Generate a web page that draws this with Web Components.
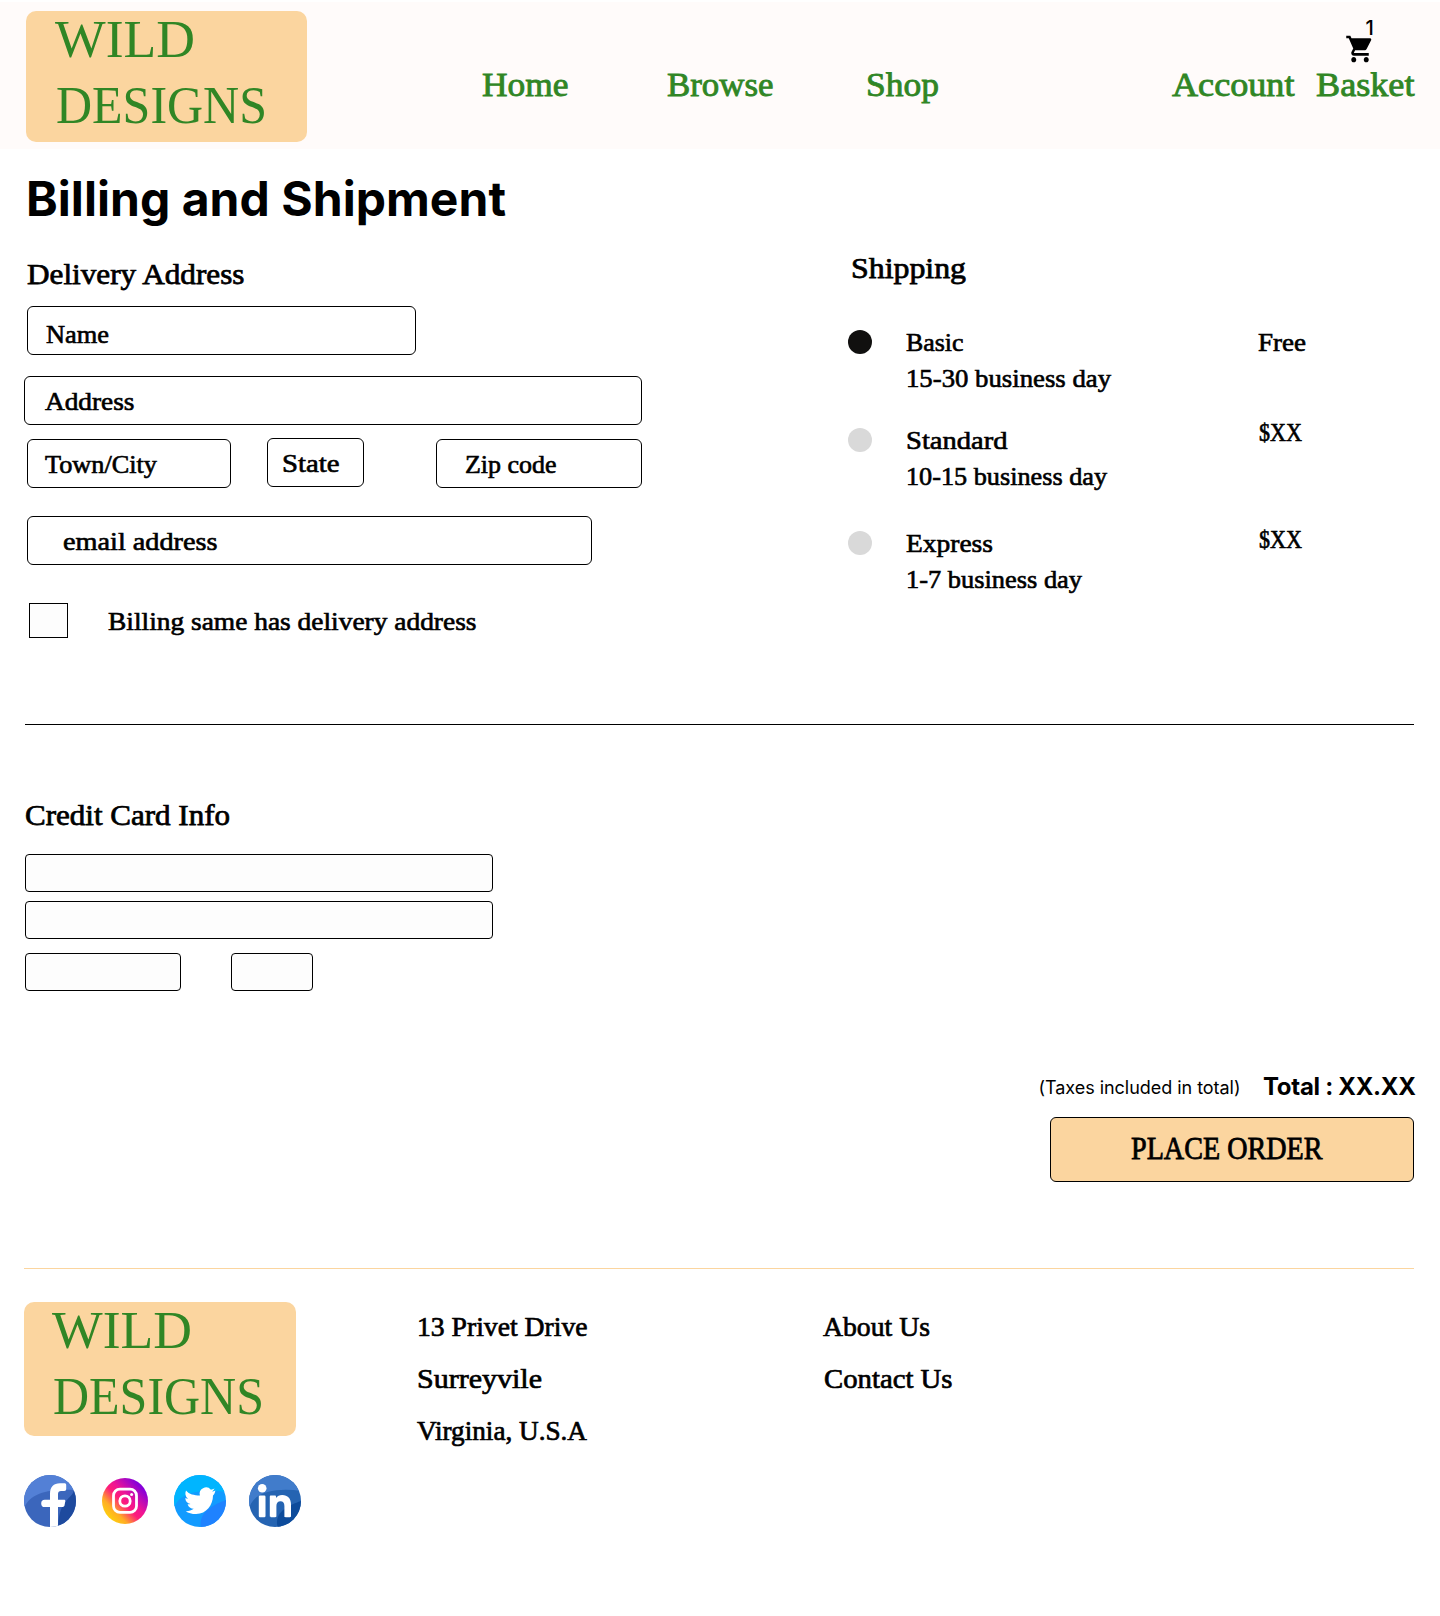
<!DOCTYPE html>
<html lang="en">
<head>
<meta charset="utf-8">
<title>Wild Designs – Billing and Shipment</title>
<style>
  html, body { margin: 0; background: #fff; }
  body { width: 1440px; height: 1616px; overflow: hidden; color: #000; }
</style>
</head>
<body>
<checkout-page></checkout-page>
<script>
const define = (name, html, setup) => customElements.define(name, class extends HTMLElement {
  constructor() {
    super();
    this.attachShadow({ mode: 'open' }).innerHTML = html;
  }
  connectedCallback() { if (setup) setup.call(this, this.shadowRoot); }
});

/* Brand plate with the two-line wordmark */
define('brand-logo', `
  <style>
    :host { display: flow-root; flex: none; box-sizing: border-box; background: #fbd59f; border-radius: 10px; color: #308625; }
    div { display: flex; flex-direction: column; margin-top: -5px; }
    fit-text:last-child { margin-left: 1px; }
  </style>
  <div><fit-text w="140" s="53" lh="66" k="0">WILD</fit-text><fit-text w="211" s="53" lh="66" k="0">DESIGNS</fit-text></div>`);

define('cart-icon', `
  <style>:host { display: block; } svg { display: block; }</style>
  <svg width="30" height="32" viewBox="0 0 24 24" preserveAspectRatio="none"><path d="M7 18c-1.1 0-1.99.9-1.99 2S5.9 22 7 22s2-.9 2-2-.9-2-2-2zM1 2v2h2l3.6 7.59-1.35 2.45c-.16.28-.25.61-.25.96 0 1.1.9 2 2 2h12v-2H7.42c-.14 0-.25-.11-.25-.25l.03-.12.9-1.63h7.45c.75 0 1.41-.41 1.75-1.03l3.58-6.49c.08-.14.12-.31.12-.48 0-.55-.45-1-1-1H5.21l-.94-2H1zm16 16c-1.1 0-1.99.9-1.99 2s.89 2 1.99 2 2-.9 2-2-.9-2-2-2z"/></svg>`);

define('site-header', `
  <style>
    :host { display: flex; margin-top: 2px; height: 147px; background: #fffbfa; color: #308625; padding-left: 26px; box-sizing: border-box; align-items: flex-start; }
    brand-logo { width: 281px; height: 131px; margin-top: 9px; padding-left: 29px; }
    nav { display: flex; margin: 62.5px 0 0 174.5px; }
    .browse { margin-left: 98.5px; } .shop { margin-left: 92.5px; }
    .account { margin-left: 233.5px; } .basket { margin-left: 21.5px; position: relative; }
    cart-icon { position: absolute; left: 29px; top: -31.5px; color: #000; }
    .count { position: absolute; left: 49.5px; top: -49.2px; color: #000; }
  </style>
  <brand-logo></brand-logo>
  <nav>
    <fit-text w="86.5" s="34" lh="40">Home</fit-text>
    <fit-text class="browse" w="106.5" s="34" lh="40">Browse</fit-text>
    <fit-text class="shop" w="73" s="34" lh="40">Shop</fit-text>
    <fit-text class="account" w="122.5" s="34" lh="40">Account</fit-text>
    <div class="basket"><cart-icon></cart-icon><fit-text class="count" sans w="9" s="20" lh="26" weight="500">1</fit-text><fit-text w="98.5" s="34" lh="40">Basket</fit-text></div>
  </nav>`);

/* Outlined field; its label is passed through the slot */
define('form-field', `
  <style>
    :host { display: block; flex: none; box-sizing: border-box; height: 49px; border: 1px solid #000; border-radius: 6px; padding-top: var(--drop, 9px); }
    :host([plain]) { height: 38px; border-radius: 4px; background: #fdfdfd; }
  </style><slot></slot>`);

define('delivery-form', `
  <style>
    :host { display: flex; flex-direction: column; align-items: flex-start; width: 848px; padding: 16px 0 0 24px; box-sizing: border-box; }
    .in { margin-left: 3px; }
    .row { display: flex; align-items: flex-start; }
    .drop { margin-top: 1px; }
    .box { width: 39px; height: 35px; box-sizing: border-box; border: 1px solid #000; background: #fdfdfd; margin-right: 39.5px; }
  </style>
  <fit-text style="margin-left:2.5px" w="217.5" s="30">Delivery Address</fit-text>
  <form-field class="in" style="width:389px;margin-top:14px;--drop:10.4px;padding-left:17.5px"><fit-text w="63">Name</fit-text></form-field>
  <form-field style="width:618px;margin-top:21px;--drop:7.4px;padding-left:20px"><fit-text w="89.5">Address</fit-text></form-field>
  <div class="row in" style="margin-top:13px">
    <form-field class="drop" style="width:204px;--drop:7.4px;padding-left:17px"><fit-text w="112">Town/City</fit-text></form-field>
    <form-field style="width:97px;margin-left:36px;--drop:7.4px;padding-left:14px"><fit-text w="57.5">State</fit-text></form-field>
    <form-field class="drop" style="width:206px;margin-left:72px;--drop:7.4px;padding-left:28px"><fit-text w="91.5">Zip code</fit-text></form-field>
  </div>
  <form-field class="in" style="width:565px;margin-top:28px;--drop:7.4px;padding-left:35px"><fit-text w="154.5">email address</fit-text></form-field>
  <div class="row" style="margin:38px 0 0 5px"><div class="box"></div><fit-text style="margin-top:1px" w="368.5">Billing same has delivery address</fit-text></div>`);

define('ship-option', `
  <style>
    :host { display: flex; align-items: flex-start; height: 72px; }
    i { width: 24px; height: 24px; border-radius: 50%; background: #d9d9d9; margin: 4.6px 34px 0 0; flex: none; }
    :host([selected]) i { background: #11100f; }
    .info { width: 351.5px; }
    ::slotted([slot=price]) { margin-top: var(--lift, 0); }
  </style>
  <i></i><div class="info"><slot></slot></div><slot name="price"></slot>`);

define('shipping-options', `
  <style>:host { display: block; padding-top: 10px; }</style>
  <fit-text style="margin-left:3px" w="115" s="30">Shipping</fit-text>
  <ship-option selected style="margin-top:39.4px"><fit-text w="57.5">Basic</fit-text><fit-text w="205">15-30 business day</fit-text><fit-text slot="price" w="48">Free</fit-text></ship-option>
  <ship-option style="margin-top:26px;--lift:-8px"><fit-text w="101.5">Standard</fit-text><fit-text w="201">10-15 business day</fit-text><fit-text slot="price" w="43" style="margin-left:1.5px">$XX</fit-text></ship-option>
  <ship-option style="margin-top:31px;--lift:-4px"><fit-text w="87">Express</fit-text><fit-text w="176">1-7 business day</fit-text><fit-text slot="price" w="43" style="margin-left:1.5px">$XX</fit-text></ship-option>`);

define('card-form', `
  <style>
    :host { display: flex; flex-direction: column; align-items: flex-start; padding: 72px 0 0 25px; }
    .row { display: flex; gap: 50px; margin-top: 14px; }
    form-field { --drop: 0px; }
  </style>
  <fit-text w="205" s="30" style="margin-left:-.5px">Credit Card Info</fit-text>
  <form-field plain style="width:468px;margin-top:21px"></form-field>
  <form-field plain style="width:468px;margin-top:9px"></form-field>
  <div class="row"><form-field plain style="width:156px"></form-field><form-field plain style="width:82px"></form-field></div>`);

define('order-summary', `
  <style>
    :host { display: flex; flex-direction: column; align-items: flex-end; padding: 81.3px 26px 0 0; }
    .sum { display: flex; height: 44.7px; margin-right: -2px; }
    .button { box-sizing: border-box; width: 364px; height: 65px; border: 1px solid #000; border-radius: 6px; background: #fbd59f; padding: 13.5px 0 0 80px; }
  </style>
  <div class="sum"><fit-text sans w="202" s="18" lh="30" weight="400" style="margin:1.2px 22.5px 0 0">(Taxes included in total)</fit-text><fit-text sans w="153" s="24" lh="30" weight="700">Total : XX.XX</fit-text></div>
  <div class="button" role="button"><fit-text w="191.5" s="31">PLACE ORDER</fit-text></div>`);

const ICONS = {
  facebook: `<svg width="52" height="52" viewBox="0 0 52 52"><defs><clipPath id="c"><circle cx="26" cy="26" r="26"/></clipPath></defs><g clip-path="url(#c)"><path fill="#3b66bc" d="M0 0h52v52H0z"/><path fill="#5380d6" d="M0 0h52v15C34 14 9 15 1 31H0z"/><path fill="#1e4a9e" d="M50 15c-2 10-15 8-16 38h18V16z"/><path fill="#fff" d="M26 52V32h-5.200a3.600 3.600 0 0 1 0-7.200H26v-6C26 12 29.500 8.200 36 8.200h4.200c1.400 0 2 .6 2 1.800v4c0 1.200-.6 1.900-2 1.900H37c-2 0-3 1.100-3 3.100v5.800h6c1 0 1.500.6 1.300 1.500l-.8 4.300c-.2.9-.8 1.400-1.800 1.400H34v20z"/></g></svg>`,
  instagram: `<svg width="46" height="46" viewBox="0 0 46 46"><defs><linearGradient id="g" x1=".1" y1=".85" x2=".82" y2=".15"><stop stop-color="#fed30c"/><stop offset=".22" stop-color="#ffad25"/><stop offset=".47" stop-color="#fd1d7a"/><stop offset=".63" stop-color="#ef1495"/><stop offset="1" stop-color="#8500da"/></linearGradient></defs><circle cx="23" cy="23" r="23" fill="url(#g)"/><g fill="none" stroke="#fff" stroke-width="2.800"><rect x="11.500" y="11.200" width="23" height="23.200" rx="6.500"/><circle cx="23" cy="23" r="5.200"/></g><circle cx="29.600" cy="16.400" r="1.500" fill="#fff"/></svg>`,
  twitter: `<svg width="52" height="52" viewBox="0 0 52 52"><defs><clipPath id="c"><circle cx="26" cy="26" r="26"/></clipPath></defs><g clip-path="url(#c)"><path fill="#129bff" d="M0 0h52v52H0z"/><path fill="#00b5ff" d="M0 0h52v17C32 14 7 16 1 31H0z"/><path fill="#1f82ff" d="M52 25C39 30 24 37 27 53h25z"/></g><path fill="#fff" d="M41.400 15.500c-1.100.6-2.300.9-3.400 1 1.100-.7 1.900-1.800 2.500-3-1.200.6-2.300 1-3.600 1.200a6.400 6.400 0 0 0-11 5.900C20 20.200 15.200 19.500 12 15.500c-1.200 3.100-.8 5.800 2 8.300-.9 0-1.900-.3-2.700-.8 0 3.200 2 5.300 5.200 6.100-.9.300-1.900.3-2.900.1.900 2.800 3.200 4.500 6.100 4.600-2.200 1.700-4.900 2.600-8 2.500 2.700 1.900 5.900 2.800 10.500 2.800C32.500 38.800 39 30 39 20.500c1-.8 1.900-2.300 2.400-5z"/></svg>`,
  linkedin: `<svg width="52" height="52" viewBox="0 0 52 52"><defs><clipPath id="c"><circle cx="26" cy="26" r="26"/></clipPath></defs><g clip-path="url(#c)"><path fill="#2564b2" d="M0 0h52v52H0z"/><path fill="#417ccb" d="M0 0h52v16C32 13 7 15 1 31H0z"/><path fill="#0d4b9b" d="M52 26C38 31 24 38 29 53h23z"/></g><g fill="#fff"><circle cx="13.200" cy="13.200" r="4.300"/><rect x="9.800" y="20.500" width="6.700" height="21.700" rx="1.200"/><path d="M22 20.500h3.800c.8 0 1.200.4 1.200 1.200v1.200c1.300-1.900 3.500-2.900 6.200-2.900 5.500 0 8.800 3.500 8.800 9.300V41c0 .8-.4 1.200-1.200 1.200h-4.200c-.8 0-1.200-.4-1.200-1.200V31c0-3.100-1.300-4.800-3.900-4.800s-4.100 1.800-4.100 4.800v10c0 .8-.4 1.200-1.200 1.200H22c-.8 0-1.200-.4-1.200-1.200V21.700c0-.8.4-1.200 1.200-1.200z"/></g></svg>`
};
define('social-icon', `<style>:host, span, svg { display: block; }</style><span></span>`, function (root) {
  root.querySelector('span').innerHTML = ICONS[this.getAttribute('name')];
});

define('site-footer', `
  <style>
    :host { display: flex; align-items: flex-start; margin: 86px 26px 0 24px; border-top: 1px solid #fbd59f; }
    .brand { width: 393px; padding-top: 33px; }
    brand-logo { width: 272px; height: 134px; padding-left: 28px; }
    .social { display: flex; align-items: center; margin-top: 39px; }
    .col { padding-top: 32px; width: 405.5px; }
  </style>
  <div class="brand"><brand-logo></brand-logo>
    <div class="social"><social-icon name="facebook"></social-icon><social-icon name="instagram" style="margin-left:26px"></social-icon><social-icon name="twitter" style="margin-left:26px"></social-icon><social-icon name="linkedin" style="margin-left:23px"></social-icon></div></div>
  <div class="col"><fit-text w="170.5" s="27" lh="52">13 Privet Drive</fit-text><fit-text w="125" s="27" lh="52">Surreyvile</fit-text><fit-text w="170" s="27" lh="52">Virginia, U.S.A</fit-text></div>
  <div class="col"><fit-text w="107" s="27" lh="52">About Us</fit-text><fit-text w="128.5" s="27" lh="52" style="margin-left:1px">Contact Us</fit-text></div>`);

define('checkout-page', `
  <style>
    :host { display: flow-root; width: 1440px; }
    .title { height: 70px; margin: 21px 0 0 26px; }
    .split { display: flex; height: 484px; }
    hr { margin: 0 26px 0 25px; border: 0; height: 1px; background: #000; }
  </style>
  <site-header></site-header>
  <div class="title"><fit-text sans w="480" s="48" lh="58" weight="700">Billing and Shipment</fit-text></div>
  <div class="split"><delivery-form></delivery-form><shipping-options></shipping-options></div>
  <hr>
  <card-form></card-form>
  <order-summary></order-summary>
  <site-footer></site-footer>`);

/* A line of text fitted to an exact width: w = width, s = size, lh = line height, k = stem weight.
   Serif lines scale their glyphs, sans lines are tracked. */
define('fit-text', `
  <style>
    :host { display: block; flex: none; white-space: nowrap; font-family: "Liberation Serif", serif; }
    :host([sans]) { font-family: Inter, sans-serif; }
    span { display: inline-block; vertical-align: top; transform-origin: 0 0; }
  </style><span><slot></slot></span>`, function (root) {
  const num = (a, d) => parseFloat(this.getAttribute(a) ?? d);
  const sans = this.hasAttribute('sans');
  const span = root.querySelector('span'), size = num('s', 25.5), width = num('w', 0);
  this.style.fontSize = size + 'px';
  this.style.lineHeight = num('lh', 36) + 'px';
  this.style.fontWeight = this.getAttribute('weight') || 400;
  this.style.width = width + 'px';
  const k = sans ? 0 : num('k', size * 0.025);
  if (k) span.style.webkitTextStroke = k + 'px currentColor';
  const natural = span.getBoundingClientRect().width, n = this.textContent.length;
  if (!sans) span.style.transform = 'scaleX(' + width / natural + ')';
  else if (n > 1) span.style.letterSpacing = (width - natural) / (n - 1) + 'px';
});
</script>
</body>
</html>
